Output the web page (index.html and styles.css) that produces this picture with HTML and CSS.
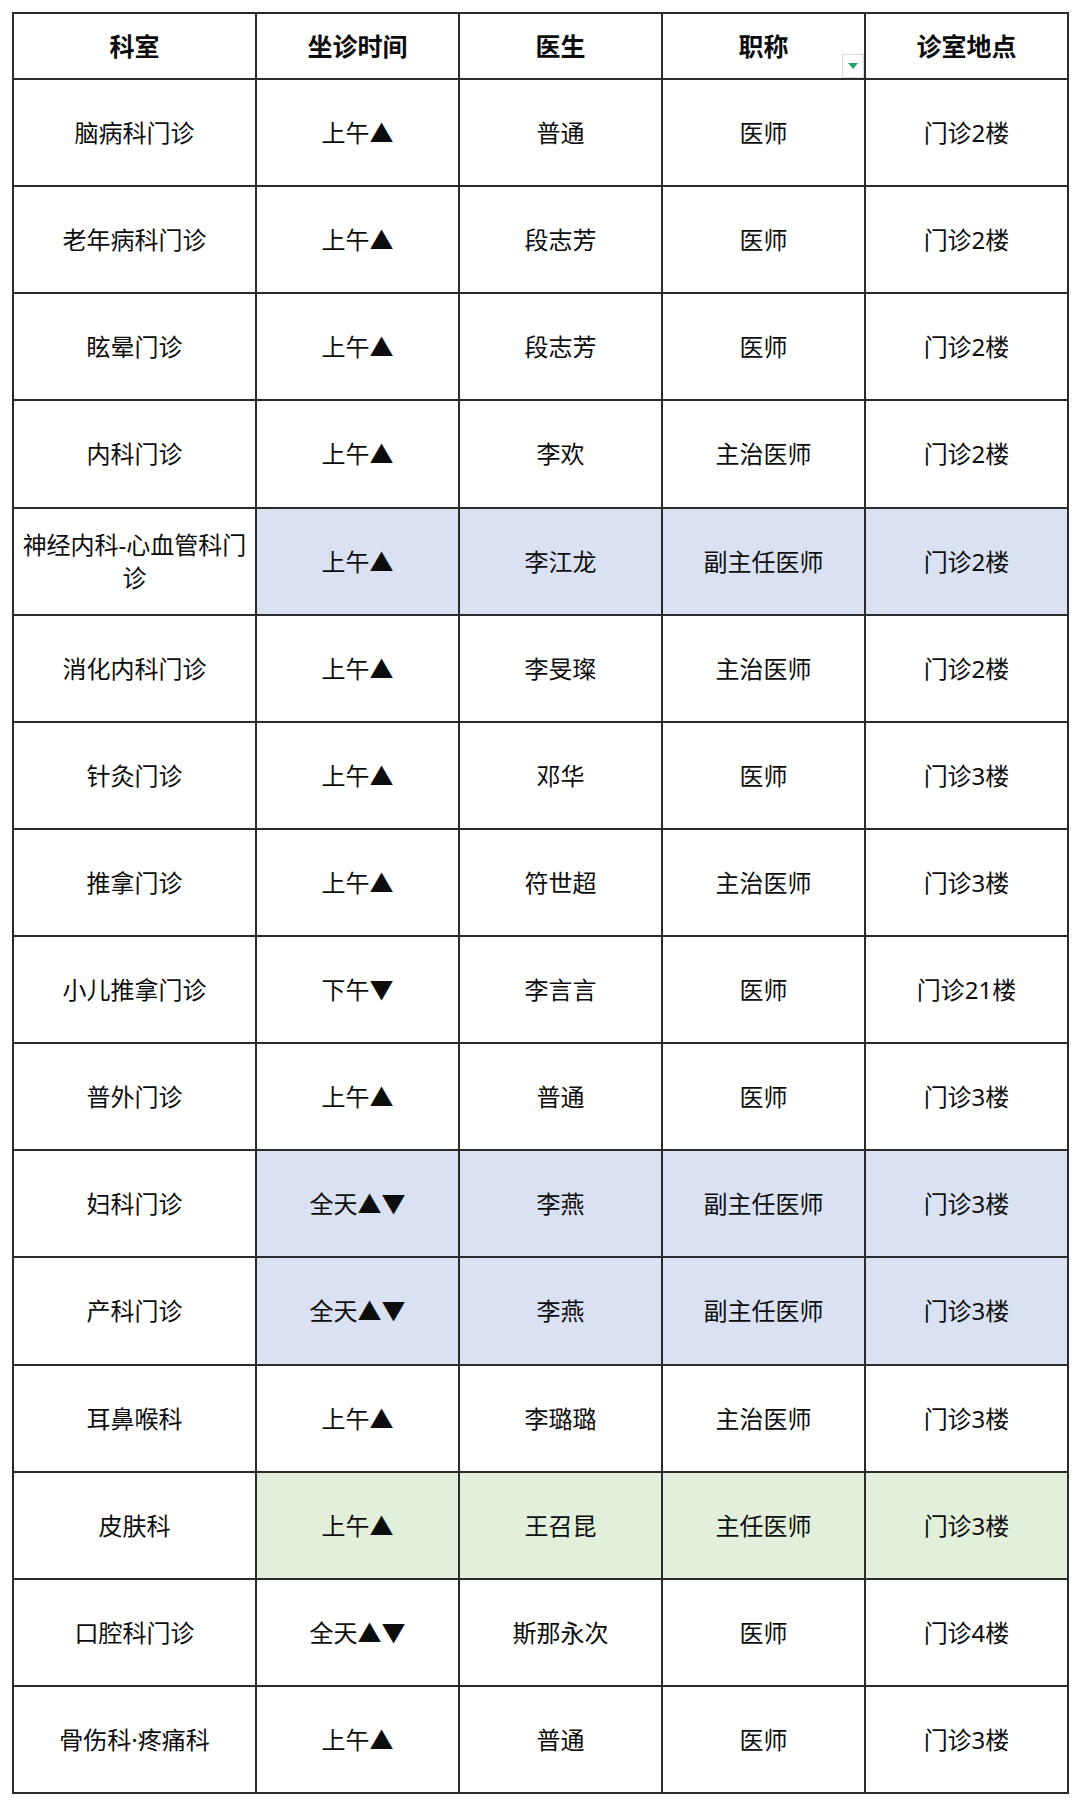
FILE: index.html
```html
<!DOCTYPE html>
<html lang="zh-CN">
<head>
<meta charset="utf-8">
<title>门诊排班表</title>
<link rel="stylesheet" href="styles.css">
</head>
<body>
<div class="sheet">
  <div class="cell head">科室</div>
  <div class="cell head">坐诊时间</div>
  <div class="cell head">医生</div>
  <div class="cell head filter">职称<span class="drop"><svg width="10" height="6" viewBox="0 0 10 6"><path d="M0 0 H10 L5 6 Z" fill="#21a366"/></svg></span></div>
  <div class="cell head">诊室地点</div>

  <div class="cell">脑病科门诊</div><div class="cell">上午▲</div><div class="cell">普通</div><div class="cell">医师</div><div class="cell">门诊2楼</div>
  <div class="cell">老年病科门诊</div><div class="cell">上午▲</div><div class="cell">段志芳</div><div class="cell">医师</div><div class="cell">门诊2楼</div>
  <div class="cell">眩晕门诊</div><div class="cell">上午▲</div><div class="cell">段志芳</div><div class="cell">医师</div><div class="cell">门诊2楼</div>
  <div class="cell">内科门诊</div><div class="cell">上午▲</div><div class="cell">李欢</div><div class="cell">主治医师</div><div class="cell">门诊2楼</div>
  <div class="cell wrap">神经内科-心血管科门诊</div><div class="cell blue">上午▲</div><div class="cell blue">李江龙</div><div class="cell blue">副主任医师</div><div class="cell blue">门诊2楼</div>
  <div class="cell">消化内科门诊</div><div class="cell">上午▲</div><div class="cell">李旻璨</div><div class="cell">主治医师</div><div class="cell">门诊2楼</div>
  <div class="cell">针灸门诊</div><div class="cell">上午▲</div><div class="cell">邓华</div><div class="cell">医师</div><div class="cell">门诊3楼</div>
  <div class="cell">推拿门诊</div><div class="cell">上午▲</div><div class="cell">符世超</div><div class="cell">主治医师</div><div class="cell">门诊3楼</div>
  <div class="cell">小儿推拿门诊</div><div class="cell">下午▼</div><div class="cell">李言言</div><div class="cell">医师</div><div class="cell">门诊21楼</div>
  <div class="cell">普外门诊</div><div class="cell">上午▲</div><div class="cell">普通</div><div class="cell">医师</div><div class="cell">门诊3楼</div>
  <div class="cell">妇科门诊</div><div class="cell blue">全天▲▼</div><div class="cell blue">李燕</div><div class="cell blue">副主任医师</div><div class="cell blue">门诊3楼</div>
  <div class="cell">产科门诊</div><div class="cell blue">全天▲▼</div><div class="cell blue">李燕</div><div class="cell blue">副主任医师</div><div class="cell blue">门诊3楼</div>
  <div class="cell">耳鼻喉科</div><div class="cell">上午▲</div><div class="cell">李璐璐</div><div class="cell">主治医师</div><div class="cell">门诊3楼</div>
  <div class="cell">皮肤科</div><div class="cell green">上午▲</div><div class="cell green">王召昆</div><div class="cell green">主任医师</div><div class="cell green">门诊3楼</div>
  <div class="cell">口腔科门诊</div><div class="cell">全天▲▼</div><div class="cell">斯那永次</div><div class="cell">医师</div><div class="cell">门诊4楼</div>
  <div class="cell">骨伤科·疼痛科</div><div class="cell">上午▲</div><div class="cell">普通</div><div class="cell">医师</div><div class="cell">门诊3楼</div>
</div>
</body>
</html>
```

FILE: styles.css
```css
html, body {
  margin: 0;
  padding: 0;
  background: #ffffff;
}
body {
  padding: 12px 0 0 12px;
  font-family: "Noto Sans", "Noto Sans CJK SC", "DejaVu Sans", sans-serif;
  color: #0d0d0d;
}
.sheet {
  display: grid;
  grid-template-columns: 243px repeat(4, 203px);
  grid-template-rows: 66px repeat(16, 107.125px);
  width: max-content;
  border-left: 2px solid #2b2b2b;
  border-top: 2px solid #2b2b2b;
}
.cell {
  box-sizing: border-box;
  border-right: 2px solid #2b2b2b;
  border-bottom: 2px solid #2b2b2b;
  display: flex;
  align-items: center;
  justify-content: center;
  text-align: center;
  font-size: 24px;
  line-height: 33px;
  padding: 0 2px;
  white-space: nowrap;
}
.head {
  font-weight: 700;
  font-size: 25px;
}
.filter {
  position: relative;
}
.drop {
  position: absolute;
  right: 0;
  bottom: 0;
  width: 22px;
  height: 24px;
  box-sizing: border-box;
  border: 1px solid #dcdcdc;
  background: #ffffff;
  display: flex;
  align-items: center;
  justify-content: center;
}
.wrap {
  white-space: normal;
}
.blue {
  background: #d9e1f2;
}
.green {
  background: #e2efda;
}
```
